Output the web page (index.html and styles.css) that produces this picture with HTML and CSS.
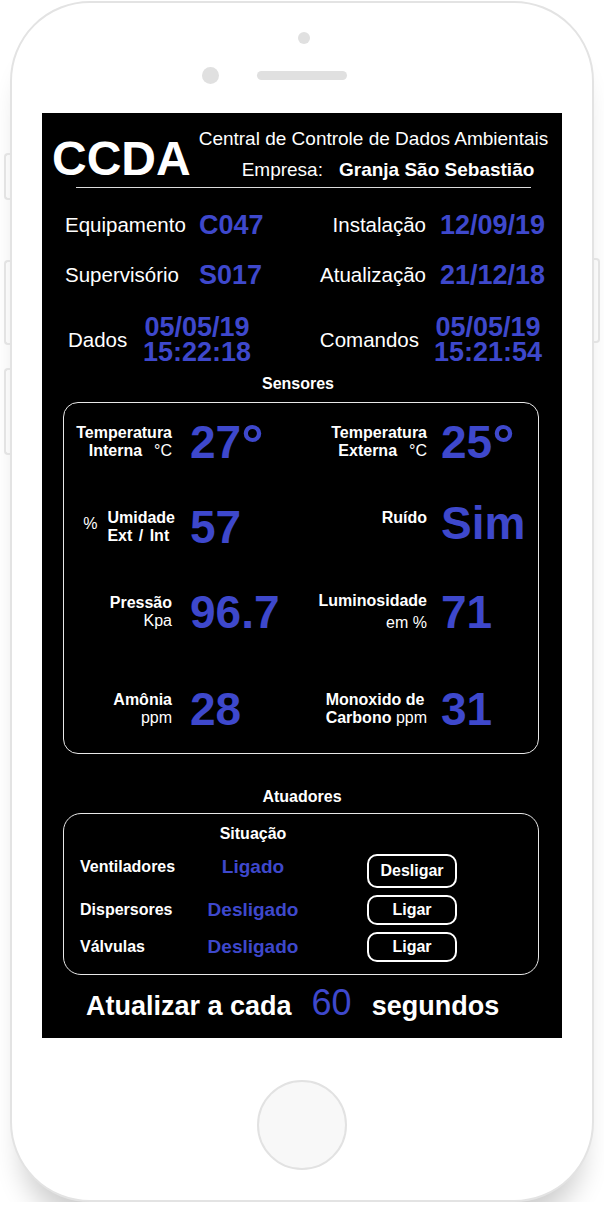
FILE: index.html
```html
<!DOCTYPE html>
<html lang="pt-BR">
<head>
    <meta charset="UTF-8">
    <meta name="viewport" content="width=device-width, initial-scale=1.0">
    <title>CCDA - Central de Controle de Dados Ambientais</title>
    <link rel="stylesheet" href="styles.css">
</head>
<body>
    <div class="phone">
        <span class="side-btn side-btn--left side-btn--mute"></span>
        <span class="side-btn side-btn--left side-btn--vol-up"></span>
        <span class="side-btn side-btn--left side-btn--vol-down"></span>
        <span class="side-btn side-btn--right side-btn--power"></span>

        <div class="phone-top">
            <div class="camera"></div>
            <div class="sensor-row">
                <span class="sensor"></span>
                <span class="speaker"></span>
            </div>
        </div>

        <main class="screen">
            <header class="header">
                <div class="logo">CCDA</div>
                <div class="title">
                    <div class="title-main">Central de Controle de Dados Ambientais</div>
                    <div class="title-company">
                        <span>Empresa:</span>
                        <strong>Granja São Sebastião</strong>
                    </div>
                </div>
            </header>
            <div class="divider"></div>

            <section class="info">
                <div class="info-row">
                    <div class="info-half">
                        <span class="info-label">Equipamento</span>
                        <span class="info-value">C047</span>
                    </div>
                    <div class="info-half info-half--right">
                        <span class="info-label">Instalação</span>
                        <span class="info-value">12/09/19</span>
                    </div>
                </div>
                <div class="info-row">
                    <div class="info-half">
                        <span class="info-label">Supervisório</span>
                        <span class="info-value">S017</span>
                    </div>
                    <div class="info-half info-half--right">
                        <span class="info-label">Atualização</span>
                        <span class="info-value">21/12/18</span>
                    </div>
                </div>
                <div class="info-row info-row--stamp">
                    <div class="info-half">
                        <span class="info-label">Dados</span>
                        <span class="info-value stamp">
                            <span class="stamp-line">05/05/19</span>
                            <span class="stamp-line">15:22:18</span>
                        </span>
                    </div>
                    <div class="info-half info-half--right">
                        <span class="info-label">Comandos</span>
                        <span class="info-value stamp">
                            <span class="stamp-line">05/05/19</span>
                            <span class="stamp-line">15:21:54</span>
                        </span>
                    </div>
                </div>
            </section>

            <h2 class="section-title section-title--sensors">Sensores</h2>
            <section class="panel sensors">
                <div class="sensor-cell">
                    <div class="sensor-label">
                        <span class="sensor-lines">Temperatura<br>Interna<span class="unit unit--gap">°C</span></span>
                    </div>
                    <div class="sensor-value">27<span class="deg">°</span></div>
                </div>
                <div class="sensor-cell">
                    <div class="sensor-label">
                        <span class="sensor-lines">Temperatura<br>Externa<span class="unit unit--gap">°C</span></span>
                    </div>
                    <div class="sensor-value">25<span class="deg">°</span></div>
                </div>
                <div class="sensor-cell">
                    <div class="sensor-label">
                        <span class="pct">%</span>
                        <span class="sensor-lines sensor-lines--left sensor-lines--humidity">Umidade<br>Ext / Int</span>
                    </div>
                    <div class="sensor-value">57</div>
                </div>
                <div class="sensor-cell">
                    <div class="sensor-label">
                        <span class="sensor-lines sensor-lines--single">Ruído</span>
                    </div>
                    <div class="sensor-value sensor-value--up">Sim</div>
                </div>
                <div class="sensor-cell">
                    <div class="sensor-label">
                        <span class="sensor-lines">Pressão<br><span class="unit">Kpa</span></span>
                    </div>
                    <div class="sensor-value">96.7</div>
                </div>
                <div class="sensor-cell">
                    <div class="sensor-label">
                        <span class="sensor-lines sensor-lines--loose">Luminosidade<br><span class="unit">em %</span></span>
                    </div>
                    <div class="sensor-value">71</div>
                </div>
                <div class="sensor-cell sensor-cell--last">
                    <div class="sensor-label">
                        <span class="sensor-lines">Amônia<br><span class="unit">ppm</span></span>
                    </div>
                    <div class="sensor-value">28</div>
                </div>
                <div class="sensor-cell sensor-cell--last">
                    <div class="sensor-label">
                        <span class="sensor-lines sensor-lines--left">Monoxido de<br>Carbono <span class="unit">ppm</span></span>
                    </div>
                    <div class="sensor-value">31</div>
                </div>
            </section>

            <h2 class="section-title section-title--actuators">Atuadores</h2>
            <section class="panel actuators">
                <div class="actuator-head">Situação</div>
                <div class="actuator-grid">
                    <span class="actuator-name">Ventiladores</span>
                    <span class="actuator-state">Ligado</span>
                    <button class="actuator-btn actuator-btn--tall">Desligar</button>

                    <span class="actuator-name">Dispersores</span>
                    <span class="actuator-state">Desligado</span>
                    <button class="actuator-btn">Ligar</button>

                    <span class="actuator-name">Válvulas</span>
                    <span class="actuator-state">Desligado</span>
                    <button class="actuator-btn">Ligar</button>
                </div>
            </section>

            <div class="refresh">
                <span>Atualizar a cada</span>
                <span class="refresh-num">60</span>
                <span>segundos</span>
            </div>
        </main>

        <div class="phone-bottom">
            <div class="home"></div>
        </div>
    </div>
</body>
</html>
```

FILE: styles.css
```css
* {
    box-sizing: border-box;
}
body {
    margin: 0;
    background: #fff;
    font-family: "Liberation Sans", Arial, sans-serif;
}

/* device frame */
.phone {
    position: relative;
    width: 584px;
    height: 1201px;
    margin: 1px auto 0;
    border: 2px solid #e3e3e3;
    border-radius: 80px;
    background: #fff;
    box-shadow: 0 30px 28px -12px rgba(0, 0, 0, 0.2);
    display: flex;
    flex-direction: column;
    align-items: center;
}
.side-btn {
    position: absolute;
    width: 6px;
    border: 2px solid #e3e3e3;
}
.side-btn--left {
    left: -8px;
    border-right: none;
    border-radius: 4px 0 0 4px;
}
.side-btn--right {
    right: -8px;
    border-left: none;
    border-radius: 0 4px 4px 0;
}
.side-btn--mute { top: 150px; height: 47px; }
.side-btn--vol-up { top: 257px; height: 85px; }
.side-btn--vol-down { top: 365px; height: 87px; }
.side-btn--power { top: 255px; height: 85px; }

.phone-top {
    width: 100%;
    height: 110px;
    display: flex;
    flex-direction: column;
    align-items: center;
}
.camera {
    width: 12px;
    height: 12px;
    margin-top: 29px;
    margin-left: 4px;
    border-radius: 50%;
    background: #e0e0e0;
}
.sensor-row {
    width: 100%;
    margin-top: 23px;
    display: grid;
    grid-template-columns: 1fr 90px 1fr;
    align-items: center;
}
.sensor {
    justify-self: end;
    width: 17px;
    height: 17px;
    margin-right: 38px;
    border-radius: 50%;
    background: #e0e0e0;
}
.speaker {
    height: 9px;
    border-radius: 5px;
    background: #e0e0e0;
}
.phone-bottom {
    flex: 1;
}
.home {
    width: 90px;
    height: 90px;
    margin-top: 42px;
    border: 2px solid #e2e2e2;
    border-radius: 50%;
    background: #f8f8f8;
}

/* screen */
.screen {
    flex-shrink: 0;
    width: 520px;
    height: 925px;
    padding-top: 10px;
    background: #000;
    color: #fff;
}
.header {
    display: flex;
    align-items: flex-start;
    padding-left: 10px;
    white-space: nowrap;
}
.logo {
    margin-top: 12px;
    font-size: 48px;
    line-height: 48px;
    font-weight: bold;
}
.title {
    margin-left: 8px;
    font-size: 19px;
    line-height: 31px;
}
.title-company {
    display: flex;
    gap: 16px;
    padding-left: 43px;
}
.divider {
    width: 455px;
    height: 1px;
    margin: 2px 0 0 34px;
    background: #dcdcdc;
}

/* equipment info */
.info {
    margin-top: 22px;
}
.info-row {
    display: flex;
    align-items: center;
    line-height: 30px;
}
.info-row + .info-row {
    margin-top: 20px;
}
.info-row--stamp {
    margin-top: 25px !important;
}
.info-half {
    display: flex;
    align-items: center;
    width: 260px;
    padding-left: 23px;
}
.info-half--right {
    padding-left: 0;
}
.info-label {
    width: 134px;
    font-size: 20.5px;
    white-space: nowrap;
}
.info-half--right .info-label {
    width: 124px;
    margin-right: 14px;
    text-align: right;
}
.info-value {
    font-size: 27px;
    font-weight: bold;
    color: #3e48cc;
    white-space: nowrap;
}
.info-row--stamp .info-half:first-child {
    padding-left: 26px;
}
.info-row--stamp .info-label {
    width: 75px;
}
.info-row--stamp .info-half--right .info-label {
    width: 117px;
    margin-right: 15px;
}
.stamp {
    width: 108px;
    text-align: center;
}
.stamp-line {
    display: block;
    height: 25px;
    line-height: 25px;
}

/* section titles and panels */
.section-title {
    margin: 9px 0 0;
    font-size: 16px;
    line-height: 20px;
    text-align: center;
}
.section-title--sensors {
    padding-right: 8px;
}
.section-title--actuators {
    margin-top: 33px;
}
.panel {
    width: 476px;
    margin: 8px 0 0 21px;
    border: 1px solid #e8e8e8;
}

/* sensors */
.sensors {
    display: grid;
    grid-template-columns: 1fr 1fr;
    row-gap: 39px;
    padding: 16px 0 21px;
    border-radius: 15px;
}
.sensor-cell {
    display: flex;
    align-items: center;
    height: 46px;
}
.sensor-cell--last {
    margin-top: 12px;
}
.sensor-label {
    display: flex;
    align-items: center;
    justify-content: flex-end;
    width: 108px;
    font-size: 16px;
    line-height: 18px;
    font-weight: bold;
}
.sensor-cell:nth-child(even) .sensor-label {
    width: 126px;
}
.sensor-lines {
    display: block;
    text-align: right;
    white-space: nowrap;
}
.sensor-lines--left {
    text-align: left;
}
.sensor-lines--humidity {
    margin-right: -3px;
    word-spacing: 2px;
}
.sensor-lines--single {
    padding-bottom: 18px;
}
.sensor-lines--loose .unit {
    display: inline-block;
    margin-top: 4px;
}
.unit {
    font-weight: normal;
}
.unit--gap {
    margin-left: 12px;
}
.pct {
    margin: 0 10px 7px 0;
    font-weight: normal;
}
.sensor-value {
    margin-left: 18px;
    font-size: 46px;
    line-height: 46px;
    font-weight: bold;
    color: #3e48cc;
    white-space: nowrap;
}
.sensor-cell:nth-child(even) .sensor-value {
    margin-left: 14px;
}
.sensor-cell:nth-child(even) .sensor-value--up {
    margin-top: -9px;
}
.deg {
    font-size: 56px;
    line-height: 0;
    vertical-align: -6px;
}

/* actuators */
.actuators {
    margin-top: 6px;
    padding: 10px 0 12px;
    border-radius: 18px;
}
.actuator-head {
    width: 134px;
    margin-left: 122px;
    font-size: 16px;
    line-height: 20px;
    font-weight: bold;
    text-align: center;
}
.actuator-grid {
    display: grid;
    grid-template-columns: 122px 134px 1fr;
    row-gap: 7px;
    align-items: center;
    margin-top: 2px;
    line-height: 30px;
}
.actuator-name {
    padding-left: 16px;
    font-size: 16px;
    font-weight: bold;
}
.actuator-state {
    font-size: 19px;
    font-weight: bold;
    color: #3e48cc;
    text-align: center;
}
.actuator-btn {
    width: 90px;
    height: 30px;
    margin-left: 47px;
    padding: 0;
    border: 2px solid #fff;
    border-radius: 10px;
    background: #000;
    color: #fff;
    font-family: "Liberation Sans", Arial, sans-serif;
    font-size: 16px;
    font-weight: bold;
}
.actuator-btn--tall {
    height: 34px;
    margin-top: 8px;
}

/* refresh interval */
.refresh {
    display: flex;
    align-items: baseline;
    gap: 20px;
    margin-top: 8px;
    padding-left: 44px;
    font-size: 27px;
    line-height: 40px;
    font-weight: bold;
}
.refresh-num {
    font-size: 36px;
    font-weight: normal;
    color: #3e48cc;
}
```
